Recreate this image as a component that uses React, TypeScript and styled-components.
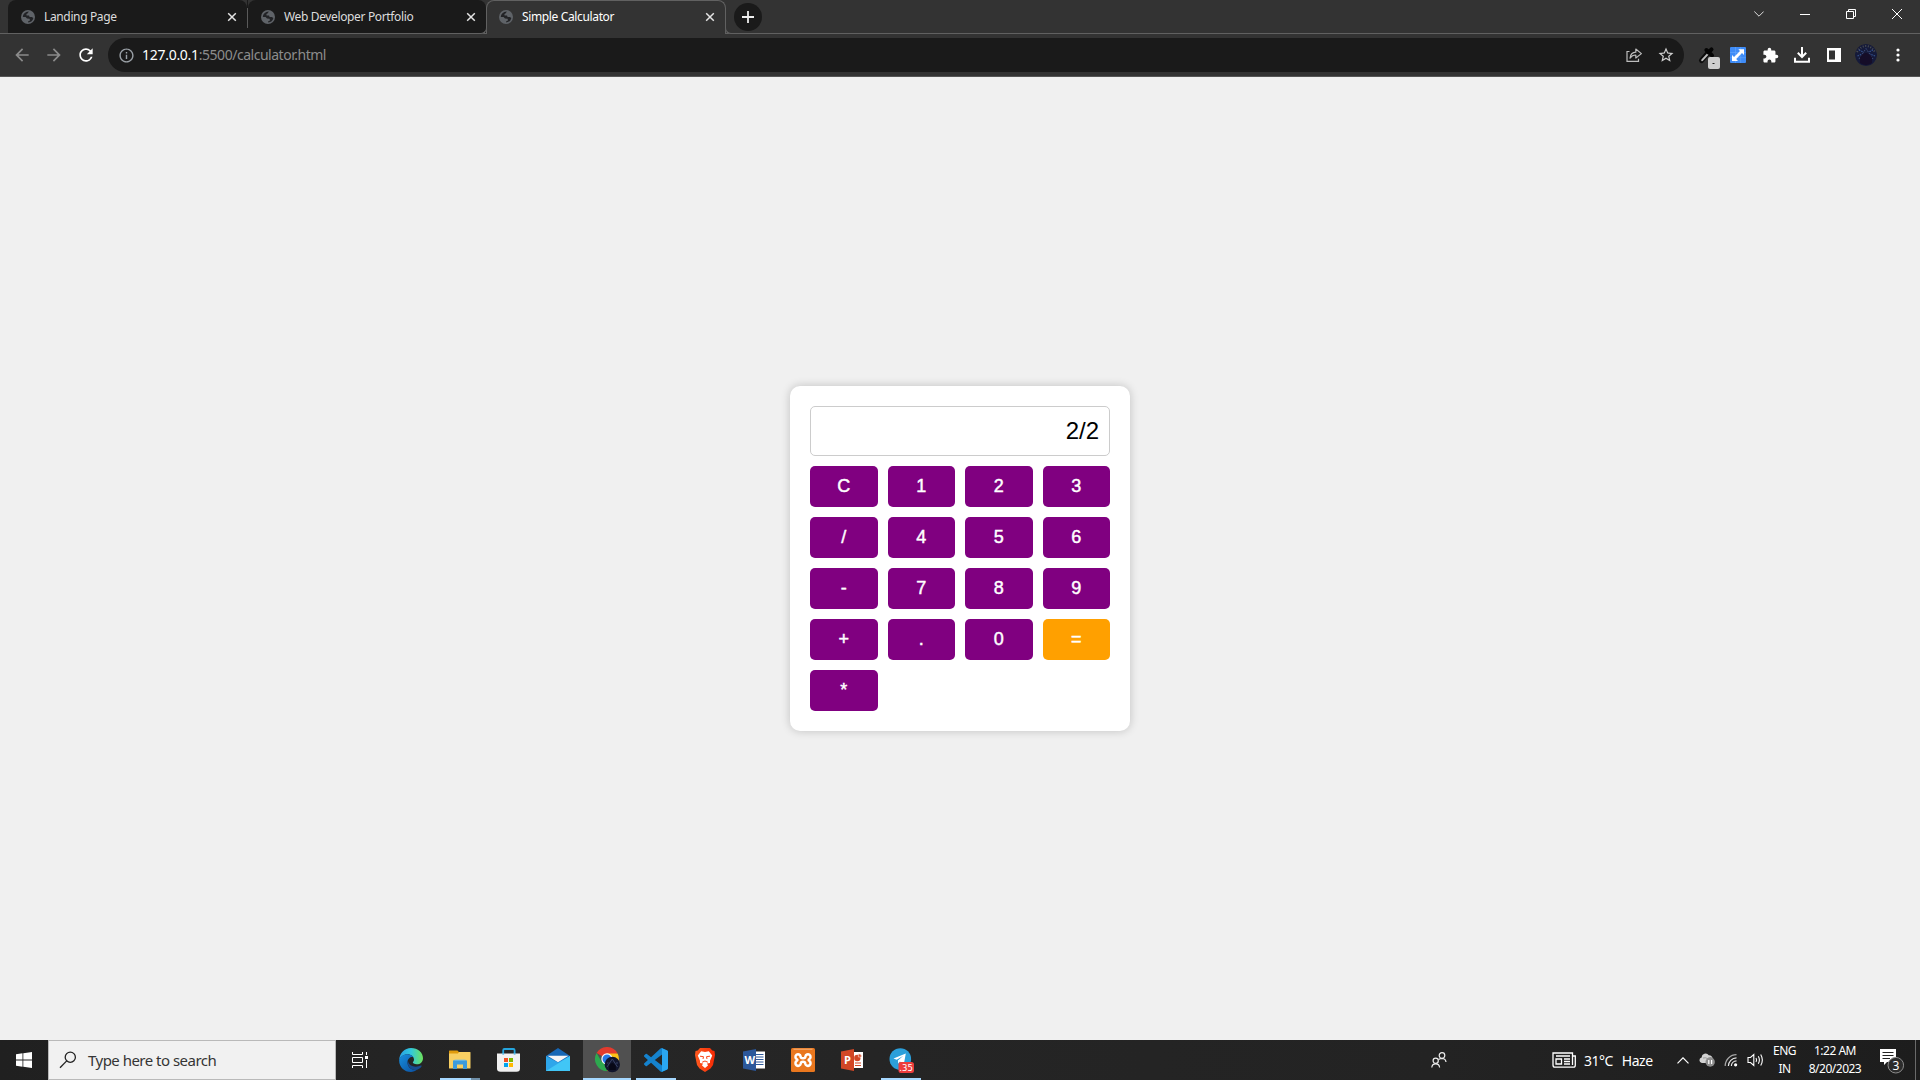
import React, { useState } from 'react';
import styled, { createGlobalStyle } from 'styled-components';
import { MdArrowBack, MdArrowForward, MdExtension, MdInfoOutline, MdRefresh, MdStarBorder } from 'react-icons/md';

const GlobalStyle = createGlobalStyle`
  *, *::before, *::after { box-sizing: border-box; }
  body { margin: 0; font-family: 'Noto Sans', 'Open Sans', sans-serif; background: #f0f0f0; }
  svg { display: block; flex: none; }
`;

const Screen = styled.div`
  width: 1920px;
  height: 1080px;
  display: flex;
  flex-direction: column;
  overflow: hidden;
`;

/* ---------- Browser chrome ---------- */

const TabStrip = styled.header`
  height: 34px;
  display: flex;
  padding-left: 8px;
  background: #333;
  border-bottom: 1px solid #616161;
`;

const Tab = styled.div<{ $active?: boolean; $width: number }>`
  position: relative;
  flex: none;
  width: ${p => p.$width}px;
  height: ${p => (p.$active ? 34 : 33)}px;
  display: flex;
  align-items: center;
  padding: 0 10px ${p => (p.$active ? 2 : 0)}px ${p => (p.$active ? 12 : 13)}px;
  background: ${p => (p.$active ? '#333' : '#1a1a1a')};
  color: ${p => (p.$active ? '#fff' : '#dcdcdc')};
  border: ${p => (p.$active ? '1px solid #616161' : '0')};
  border-bottom: 0;
  border-radius: 8px 8px 0 0;
  &::before, &::after {
    content: '';
    display: ${p => (p.$active ? 'block' : 'none')};
    position: absolute;
    bottom: 0;
    width: 6px;
    height: 6px;
    border-bottom: 1px solid #616161;
  }
  &::before { left: -6px; background: #1a1a1a; border-right: 1px solid #616161; border-bottom-right-radius: 6px; }
  &::after { right: -6px; background: #333; border-left: 1px solid #616161; border-bottom-left-radius: 6px; }
`;

const TabDivider = styled.div`
  width: 1px;
  height: 33px;
  padding: 8px 0 5px;
  background: #5a5a5a content-box, #1a1a1a;
  background: linear-gradient(#5a5a5a, #5a5a5a) content-box, #1a1a1a;
`;

const TabTitle = styled.span`
  flex: 1;
  padding-left: 9px;
  font-size: 12px;
  line-height: 16px;
  white-space: nowrap;
  letter-spacing: -0.36px;
`;

const NewTab = styled.div`
  width: 28px;
  height: 28px;
  margin: 3px 0 0 8px;
  border-radius: 50%;
  background: #1a1a1a;
  display: grid;
  place-items: center;
`;

const WindowControls = styled.div`
  display: flex;
  margin-left: auto;
`;

const WindowButton = styled.div`
  width: 46px;
  height: 28px;
  display: grid;
  place-items: center;
`;

const Toolbar = styled.div`
  height: 43px;
  display: flex;
  align-items: center;
  padding: 0 6px;
  background: #333;
  border-bottom: 1px solid #555;
`;

const ToolButton = styled.div<{ $color?: string }>`
  width: 32px;
  height: 32px;
  display: grid;
  place-items: center;
  color: ${p => p.$color ?? '#fff'};
`;

const Omnibox = styled.div`
  width: 1576px;
  height: 34px;
  margin: 0 6px;
  padding: 0 2px;
  display: flex;
  align-items: center;
  border-radius: 17px;
  background: #1a1a1a;
`;

const Url = styled.div`
  flex: 1;
  font-size: 14px;
  line-height: 20px;
  letter-spacing: -0.48px;
  color: #8c8c8c;
`;

const Host = styled.span`
  color: #fff;
  letter-spacing: -0.28px;
`;

const Avatar = styled.div`
  width: 22px;
  height: 22px;
  border-radius: 50%;
  overflow: hidden;
`;

/* ---------- Calculator ---------- */

const Page = styled.main`
  flex: 1;
  display: flex;
  justify-content: center;
  align-items: center;
  background: #f0f0f0;
`;

const Card = styled.div`
  width: 340px;
  padding: 20px;
  border-radius: 10px;
  background: #fff;
  box-shadow: 0 0 10px rgba(0, 0, 0, 0.2);
`;

const Display = styled.input`
  display: block;
  width: 100%;
  height: 50px;
  margin: 0 0 10px;
  padding: 10px;
  border: 1px solid #ccc;
  border-radius: 5px;
  outline: 0;
  background: #fff;
  color: #000;
  font: 24px 'Liberation Sans', Arial, sans-serif;
  text-align: right;
`;

const Keys = styled.div`
  display: grid;
  grid-template-columns: repeat(4, 1fr);
  gap: 10px;
`;

const Key = styled.button<{ $accent?: boolean }>`
  height: 41px;
  padding: 9px 10px 11px;
  border: 0;
  border-radius: 5px;
  background: ${p => (p.$accent ? '#ffa000' : '#800080')};
  color: #fff;
  font: 18px/20px 'Liberation Sans', Arial, sans-serif;
  -webkit-text-stroke: 0.45px #fff;
  cursor: pointer;
`;

/* ---------- Taskbar ---------- */

const Taskbar = styled.footer`
  height: 40px;
  display: flex;
  background: linear-gradient(90deg, #202020, #262626 30%, #232323 75%, #1d1d1d);
  color: #fff;
`;

const StartButton = styled.div`
  width: 48px;
  display: grid;
  place-items: center;
`;

const SearchBox = styled.div`
  width: 288px;
  display: flex;
  align-items: center;
  padding-left: 10px;
  gap: 11px;
  border: 1px solid #b9b9b9;
  background: #f1f1f1;
  color: #353535;
  font-size: 15px;
  letter-spacing: -0.52px;
`;

const Apps = styled.div`
  display: flex;
  gap: 1px;
  margin-left: 3px;
`;

const TaskbarApp = styled.div<{ $state?: 'open' | 'stacked' | 'active' }>`
  width: 48px;
  height: 40px;
  display: grid;
  grid-template-rows: 38px 2px;
  place-items: center;
  background: ${p => (p.$state === 'active' ? '#505050' : 'transparent')};
  svg { margin-top: 1px; }
  &::after {
    content: '';
    width: ${p => (p.$state === 'active' ? 48 : 40)}px;
    height: 2px;
    background: ${p =>
      !p.$state ? 'transparent' : p.$state === 'stacked' ? 'linear-gradient(90deg, #a6d8ff 31px, #6f8fa8 31px)' : '#a6d8ff'};
  }
`;

const Tray = styled.div`
  display: flex;
  margin-left: auto;
`;

const TrayCell = styled.div<{ $width: number }>`
  width: ${p => p.$width}px;
  display: grid;
  place-items: center;
`;

const Weather = styled.div`
  width: 128px;
  margin-left: 80px;
  padding-left: 9px;
  display: flex;
  align-items: center;
  font-size: 14px;
  letter-spacing: -0.5px;
`;

const Temperature = styled.span`
  margin: 0 9px 0 8px;
`;

const TrayText = styled.div<{ $width: number }>`
  width: ${p => p.$width}px;
  padding-top: 2px;
  text-align: center;
  font-size: 12px;
  line-height: 17.5px;
  letter-spacing: -0.5px;
`;

const ShowDesktop = styled.div`
  width: 5px;
  border-left: 1px solid #6a6a6a;
`;

/* ---------- Icons ---------- */

const Globe = () => (
  <svg width="14" height="14" viewBox="0 0 14 14">
    <circle cx="7" cy="7" r="7" fill="#5f6368" />
    <path d="M7.8 1.6 6.8 3.2 5.4 4 5.6 5.4 8 5.6 8.6 7H10.8L12.4 8A5.6 5.6 0 0 1 7.2 12.4V11.2L9 10.4 8.6 8.8 6 8.4 4.6 7H1.8A5.5 5.5 0 0 1 3.2 3.6 6 6 0 0 1 7.8 1.6Z" fill="#222326" />
  </svg>
);

const CloseX = () => (
  <svg width="10" height="10" viewBox="0 0 10 10">
    <path d="M1.2 1.2 8.8 8.8M8.8 1.2 1.2 8.8" stroke="#e4e4e4" strokeWidth="1.5" />
  </svg>
);

const Share = () => (
  <svg width="16" height="16" viewBox="0 0 16 16" fill="none" stroke="#bdbdbd" strokeWidth="1.2">
    <path d="M3.5 4.5H1V14.4H12.5V11.8" />
    <path d="M4 11.2C4.4 7.5 6.6 5.3 9.8 5.2V2L15.4 6.6 9.8 11V8C7.2 8 5.4 9 4 11.2Z" strokeLinejoin="round" />
  </svg>
);

const Dropper = () => (
  <svg width="32" height="32" viewBox="0 0 32 32">
    <path d="M11.5 21.5 18 14" stroke="#0c0c0c" strokeWidth="5" strokeLinecap="round" />
    <path d="M12.2 21.2 18.2 14.6" stroke="#bdbdbd" strokeWidth="2" strokeLinecap="round" />
    <path d="M16.4 11 22 16.4M18.5 13.5 21.5 10.4" stroke="#050505" strokeWidth="4" strokeLinecap="round" />
    <rect x="18" y="18" width="12" height="12" rx="2" fill="#cfcfcf" />
    <path d="M22.5 24.5H24.5" stroke="#222" />
  </svg>
);

const Expand = () => (
  <svg width="16" height="16" viewBox="0 0 16 16">
    <rect width="16" height="16" rx="1" fill="#3f8cf7" />
    <path d="M5.5 0V16M10.7 0V16M0 5.5H16M0 10.7H16" stroke="#67a7fb" strokeWidth=".6" />
    <path d="M8.3 2.2H14V8L12 6.1 6.2 12 8 14H2V8L4 10 10 4.1Z" fill="#fff" />
  </svg>
);

const Download = () => (
  <svg width="16" height="16" viewBox="0 0 16 16" fill="none" stroke="#fff" strokeWidth="2">
    <path d="M8 0V9.5M3.8 5.8 8 10 12.2 5.8M1 10.7V14.8H15V10.7" />
  </svg>
);

const SidePanel = () => (
  <svg width="14" height="14" viewBox="0 0 14 14">
    <path fillRule="evenodd" d="M0 0H14V14H0ZM2 2.5V11.5H8V2.5Z" fill="#fff" />
  </svg>
);

const Portrait = ({ size }: { size: number }) => (
  <svg width={size} height={size} viewBox="0 0 22 22">
    <circle cx="11" cy="11" r="11" fill="#151a3a" />
    <path d="M2 8 Q6 2 11 2 T20 8" stroke="#4d5052" strokeWidth="2" strokeDasharray="1 1.6" fill="none" />
    <path d="M2.5 12 7 10M20 12 15 10M4 6 8 8M18 6 14 8" stroke="#34508a" strokeWidth="1.3" strokeDasharray="1.5 1" />
    <path d="M4 15 11 4.5 18 15" stroke="#3f4d78" strokeWidth="1" strokeDasharray="2 1" fill="none" />
    <path d="M5 13 Q11 5 17 13V19Q11 23 5 19Z" fill="#150d28" />
  </svg>
);

const Windows = () => (
  <svg width="16" height="16" viewBox="0 0 16 16" fill="#fff">
    <path d="M0 2.2 6.5 1.3V7.6H0ZM7.3 1.2 16 0V7.6H7.3ZM0 8.4H6.5V14.7L0 13.8ZM7.3 8.4H16V16L7.3 14.8Z" />
  </svg>
);

const Search = () => (
  <svg width="18" height="18" viewBox="0 0 18 18" fill="none" stroke="#222" strokeWidth="1.3">
    <circle cx="11.3" cy="6.2" r="5.1" />
    <path d="M7.7 9.9 1 16.8" />
  </svg>
);

const TaskView = () => (
  <svg width="16" height="16" viewBox="0 0 16 16" fill="none" stroke="#fff" strokeWidth="1">
    <path d="M.5 0V2.5H10.5V0M.5 16V13.5H10.5V16M.5 5.5H10.5V10.5H.5ZM14.5 0V3M14.5 8V16" />
    <rect x="13" y="4" width="3" height="3" fill="#fff" stroke="none" />
  </svg>
);

const Edge = () => (
  <svg width="24" height="24" viewBox="0 0 24 24">
    <defs>
      <linearGradient id="edgeTop" x1="0" x2="1">
        <stop offset="0" stopColor="#279fe4" /><stop offset=".5" stopColor="#32c8dc" /><stop offset="1" stopColor="#6ee35b" />
      </linearGradient>
      <linearGradient id="edgeBase" x1="0" y1="0" x2="1" y2="1">
        <stop offset="0" stopColor="#178ede" /><stop offset="1" stopColor="#0b4f9f" />
      </linearGradient>
    </defs>
    <path d="M.2 12C.5 5.4 5.5.1 12 .1 19 .1 24 5 24 10.2 24 14 21.2 16.3 17.8 16.3 15.2 16.3 13.8 15.3 13.8 14.6 13.8 14 15 13.4 15 11.5 15 8.5 12 6.2 8.6 6.2 4.5 6.2 1.4 8.8.2 12Z" fill="url(#edgeTop)" />
    <path d="M.2 12C1 8.6 4.3 6.2 8.6 6.2 11.4 6.2 13.7 7.6 14.6 9.4 12 8.3 8.5 10.5 8.5 14.4 8.5 19 13 23 18.2 21.5 16.5 23 14.2 24 12 24 5 24-.2 18.4.2 12Z" fill="url(#edgeBase)" />
    <path d="M8.9 12.3C7.5 17 11 22.4 17 22 19.7 21.6 21.8 19.6 22.6 18.2 22.9 17.5 22.4 17.2 21.8 17.6 17 20 9.5 18.8 8.9 12.3Z" fill="#174c8f" />
  </svg>
);

const Explorer = () => (
  <svg width="22" height="20" viewBox="0 0 22 20">
    <rect x="0" y="2" width="21.5" height="16.5" rx=".6" fill="#f8cf62" />
    <path d="M0 1Q0 .5 .6 .5H8.5L10 2.2 8.8 3.6H0Z" fill="#e09b0c" />
    <path d="M4 11Q4 10.2 5 10.2H17Q18 10.2 18 11V19H14V14.5H8V19H4Z" fill="#3d9bdb" />
    <path d="M5.5 10.2H16.5" stroke="#65baf0" />
  </svg>
);

const Store = () => (
  <svg width="24" height="24" viewBox="0 0 24 24">
    <path d="M6.2 6V2.2Q6.2 1 7.4 1H16.4Q17.6 1 17.6 2.2V6" stroke="#25a5dd" strokeWidth="1.8" fill="none" />
    <path d="M0 5.5H23V20.5Q23 23.8 19.5 23.8H3.5Q0 23.8 0 20.5Z" fill="#f1f1f1" />
    <path d="M6.2 5.5V6.5M17.6 5.5V6.5" stroke="#25a5dd" strokeWidth="1.8" />
    <path d="M7 10H11V14H7Z" fill="#f25022" /><path d="M12 10H16V14H12Z" fill="#7fba00" />
    <path d="M7 15H11V19H7Z" fill="#00a4ef" /><path d="M12 15H16V19H12Z" fill="#ffb900" />
  </svg>
);

const Mail = () => (
  <svg width="24" height="23" viewBox="0 0 24 23">
    <path d="M0 8 12 0 24 8V16H0Z" fill="#1767b5" />
    <path d="M0 8 12 14.5 24 8V23H0Z" fill="#2ea6ea" />
    <path d="M24 8 0 23H24Z" fill="#41c6f6" />
    <path d="M1.5 7.8H22.5L12 14.2Z" fill="#f5f5f5" />
  </svg>
);

const Chrome = () => (
  <svg width="26" height="26" viewBox="-1 0 26 26">
    <path d="M12 12 1.6 6A12 12 0 0 1 22.4 6Z" fill="#e33b2e" />
    <path d="M12 12V24A12 12 0 0 1 1.6 6L6.8 15Z" fill="#2da94f" />
    <path d="M12 6.5H22.6A12 12 0 0 1 12 24L17 14.5Z" fill="#fbc116" />
    <circle cx="12" cy="12" r="5.7" fill="#fff" /><circle cx="12" cy="12" r="4.5" fill="#2878e8" />
    <circle cx="17.3" cy="17.5" r="7.7" fill="#11152c" />
    <path d="M12 20 17.3 12 22.5 20M12 16H13.5M21 16H23" stroke="#394266" strokeWidth="1" fill="none" />
    <path d="M14 19Q17.3 13 20.8 19V23H14Z" fill="#080817" />
  </svg>
);

const VsCode = () => (
  <svg width="24" height="24" viewBox="0 0 24 24">
    <path d="M23.15 2.587 18.21.21a1.494 1.494 0 0 0-1.705.29l-9.46 8.63-4.12-3.128a1 1 0 0 0-1.276.057L.327 7.261A1 1 0 0 0 .326 8.74L3.899 12 .326 15.26a1 1 0 0 0 .001 1.479L1.65 17.94a1 1 0 0 0 1.276.057l4.12-3.128 9.46 8.63a1.492 1.492 0 0 0 1.704.29l4.942-2.377A1.5 1.5 0 0 0 24 20.06V3.939a1.5 1.5 0 0 0-.85-1.352zM18.004 17.448 10.826 12l7.178-5.448z" fill="#1583ce" />
    <path d="M18 .2 23.15 2.6Q24 3 24 4V20Q24 21 23.15 21.4L18 23.8Z" fill="#2aa7f2" />
  </svg>
);

const Brave = () => (
  <svg width="20" height="24" viewBox="0 0 20 24">
    <defs><linearGradient id="brave"><stop stopColor="#ff5a1f" /><stop offset="1" stopColor="#f52a05" /></linearGradient></defs>
    <path d="M5 0H15L17.3 2.5 19.5 3 20 7 18 17 15.5 20.5 10 24 4.5 20.5 2 17 0 7 .5 3 2.7 2.5Z" fill="url(#brave)" />
    <path d="M6.2 3.3 10 4 13.8 3.3 17.2 7.4 16.4 9.5 15 12.7 15 15 12 15.5 13 17.5 10 20 7 17.5 8 15.5 5 15 5 12.7 3.6 9.5 2.8 7.4Z" fill="#fff" />
    <path d="M5 8.2 8.5 8.7 8 11M15 8.2 11.5 8.7 12 11M7.2 14.2 10 13 12.8 14.2" stroke="#fa4516" strokeWidth="1" fill="none" />
  </svg>
);

const OfficeLetter = styled.text`
  font: bold 11px 'Open Sans', sans-serif;
  fill: #fff;
`;

const Word = () => (
  <svg width="22" height="22" viewBox="0 0 22 22">
    <rect x="11" y="2.5" width="11" height="17" fill="#fff" />
    <path d="M13 5.5H20.5M13 8H20.5M13 10.5H20.5M13 13H20.5M13 15.5H20.5" stroke="#2b579a" strokeWidth="1.1" />
    <path d="M0 2.5 13 0V22L0 19.5Z" fill="#2b579a" />
    <OfficeLetter x="1.4" y="15">W</OfficeLetter>
  </svg>
);

const PowerPoint = () => (
  <svg width="22" height="22" viewBox="0 0 22 22">
    <rect x="11" y="3" width="11" height="16" fill="#fff" />
    <path d="M14 14H20M14 16.5H20" stroke="#d24726" strokeWidth="1.2" />
    <circle cx="16.3" cy="9" r="3.2" fill="#d24726" /><path d="M17.4 4.8V8H20.6A3.2 3.2 0 0 0 17.4 4.8Z" fill="#d24726" stroke="#fff" strokeWidth=".5" />
    <path d="M0 2.5 13 0V22L0 19.5Z" fill="#d24726" />
    <OfficeLetter x="3" y="15">P</OfficeLetter>
  </svg>
);

const Xampp = () => (
  <svg width="24" height="24" viewBox="0 0 24 24">
    <rect width="24" height="24" rx="1.5" fill="#e9771e" /><path d="M2.5 1.2H21.5" stroke="#f6b27b" />
    <path d="M9.6 8.8V8.4A2.6 2.6 0 1 0 5.8 11.2Q7 12 5.8 12.8A2.7 2.7 0 1 0 9.8 15.6Q9.6 13.8 12 13.8T14.2 15.6A2.7 2.7 0 1 0 18.2 12.8Q17 12 18.2 11.2A2.6 2.6 0 1 0 14.4 8.4Q14.4 10.2 12 10.2T9.6 8.4" fill="none" stroke="#fff" strokeWidth="2.5" />
  </svg>
);

const BadgeText = styled.text`
  font: 8.5px 'DejaVu Sans', sans-serif;
  fill: #fff;
`;

const Telegram = () => (
  <svg width="26" height="26" viewBox="-1 0 26 26">
    <circle cx="11.3" cy="12" r="10.8" fill="#2b9fda" />
    <path d="M4.5 11.4 16.8 6.6 14.8 17.4 10.9 14.6 9.3 16.8 8.9 13.5 14.3 8.8 7.7 12.7Z" fill="#fff" />
    <rect x="9.5" y="15" width="15.5" height="11" rx="2.5" fill="#ed3d3d" />
    <BadgeText x="10.3" y="23.5" textLength="13.5">.35</BadgeText>
  </svg>
);

const People = () => (
  <svg width="16" height="16" viewBox="0 0 16 16" fill="none" stroke="#eee" strokeWidth="1.2">
    <circle cx="11" cy="3.5" r="2.8" /><circle cx="4.7" cy="8.8" r="2.6" />
    <path d="M.8 15.5Q1 11.8 4.7 11.8T8.6 15.5M7.5 7.5Q9 6.5 11 6.5 14.6 6.6 15 10" />
  </svg>
);

const News = () => (
  <svg width="24" height="16" viewBox="0 0 24 16" fill="none" stroke="#fff" strokeWidth="1.3">
    <path d="M20.5 12V1H1V13Q1 15.2 3 15.2H21.5Q23.3 15.2 23.3 13V4H20.5V13M4 4H18M12 7H18M12 9.5H18M12 12H18M4 7H9.5V12H4Z" />
  </svg>
);

const Cloud = () => (
  <svg width="16" height="14" viewBox="0 0 16 14">
    <path d="M2.8 10A2.8 2.8 0 0 1 2.6 4.5 4 4 0 0 1 9.8 2.2 3.5 3.5 0 0 1 13.5 6L9 10Z" fill="#d2d2d2" />
    <path d="M4 5Q7 4 9 6L12.5 4" stroke="#9a9a9a" fill="none" />
    <circle cx="11.2" cy="9" r="4.7" fill="#8d8d8d" /><path d="M9.8 7V11M12.6 7V11" stroke="#fff" strokeWidth="1.2" />
  </svg>
);

const Wifi = () => (
  <svg width="14" height="14" viewBox="0 0 14 14" fill="none" strokeWidth="1.2">
    <path d="M1.2 13A11.3 11.3 0 0 1 12.5 1.7" stroke="#a8a8a8" />
    <path d="M4.4 13A8.2 8.2 0 0 1 12.5 4.9M7.4 13A5.2 5.2 0 0 1 12.5 7.9" stroke="#e8e8e8" />
    <circle cx="11.6" cy="11.8" r="1.6" fill="#fff" />
  </svg>
);

const Speaker = () => (
  <svg width="18" height="14" viewBox="0 0 18 14" fill="none" stroke="#fff" strokeWidth="1.1">
    <path d="M1 4.5H3.5L6.8 1.5V12.5L3.5 9.5H1ZM9 5Q10.2 7 9 9M11.3 3.3Q13.5 7 11.3 10.7M13.7 1.5Q17 7 13.7 12.5" />
  </svg>
);

const CountText = styled.text`
  font: 12px 'Noto Sans', sans-serif;
  fill: #fff;
`;

const Notifications = () => (
  <svg width="26" height="28" viewBox="0 0 26 28">
    <path d="M1 3H17V16H8L5 19V16H1Z" fill="#fff" />
    <path d="M3.5 6.5H14.5M3.5 9.5H14.5M3.5 12.5H11" stroke="#222" />
    <circle cx="16.8" cy="19.2" r="7.8" fill="#2c2c2c" stroke="#8c8c8c" />
    <CountText x="13.5" y="23.6">3</CountText>
  </svg>
);

const tabs = [
  { title: 'Landing Page', width: 239 },
  { title: 'Web Developer Portfolio', width: 238 },
  { title: 'Simple Calculator', width: 240, active: true },
];

const keys = ['C', '1', '2', '3', '/', '4', '5', '6', '-', '7', '8', '9', '+', '.', '0', '=', '*'];

export default function App() {
  const [expression, setExpression] = useState('2/2');

  const evaluate = () => {
    const match = expression.match(/^(-?[\d.]+)([-+*/])(-?[\d.]+)$/);
    if (!match) return;
    const a = Number(match[1]);
    const b = Number(match[3]);
    const result = match[2] === '+' ? a + b : match[2] === '-' ? a - b : match[2] === '*' ? a * b : a / b;
    setExpression(String(result));
  };

  const press = (key: string) => {
    if (key === 'C') setExpression('');
    else if (key === '=') evaluate();
    else setExpression(expression + key);
  };

  return (
    <Screen>
      <GlobalStyle />
      <TabStrip>
        {tabs.map((tab, i) => (
          <React.Fragment key={tab.title}>
            {i === 1 && <TabDivider />}
            <Tab $active={tab.active} $width={tab.width}>
              <Globe />
              <TabTitle>{tab.title}</TabTitle>
              <CloseX />
            </Tab>
          </React.Fragment>
        ))}
        <NewTab>
          <svg width="12" height="12" viewBox="0 0 12 12"><path d="M6 0V12M0 6H12" stroke="#eee" strokeWidth="1.8" /></svg>
        </NewTab>
        <WindowControls>
          <WindowButton><svg width="10" height="6" viewBox="0 0 10 6"><path d="M.3.5 5 5.2 9.7.5" fill="none" stroke="#ddd" /></svg></WindowButton>
          <WindowButton><svg width="10" height="2" viewBox="0 0 10 2"><path d="M0 1.5H10" stroke="#fff" /></svg></WindowButton>
          <WindowButton><svg width="10" height="10" viewBox="0 0 10 10"><path d="M.5 2.5H7.5V9.5H.5ZM2.5 2.5V.5H9.5V7.5H7.5" fill="none" stroke="#fff" /></svg></WindowButton>
          <WindowButton><svg width="10" height="10" viewBox="0 0 10 10"><path d="M0 0 10 10M10 0 0 10" stroke="#fff" /></svg></WindowButton>
        </WindowControls>
      </TabStrip>

      <Toolbar>
        <ToolButton $color="#8b8b8b"><MdArrowBack size={20} /></ToolButton>
        <ToolButton $color="#8b8b8b"><MdArrowForward size={20} /></ToolButton>
        <ToolButton><MdRefresh size={20} /></ToolButton>
        <Omnibox>
          <ToolButton $color="#9aa0a6"><MdInfoOutline size={17} /></ToolButton>
          <Url><Host>127.0.0.1</Host>:5500/calculator.html</Url>
          <ToolButton><Share /></ToolButton>
          <ToolButton $color="#cfcfcf"><MdStarBorder size={18} /></ToolButton>
        </Omnibox>
        <ToolButton><Dropper /></ToolButton>
        <ToolButton><Expand /></ToolButton>
        <ToolButton><MdExtension size={17} /></ToolButton>
        <ToolButton><Download /></ToolButton>
        <ToolButton><SidePanel /></ToolButton>
        <ToolButton><Avatar><Portrait size={22} /></Avatar></ToolButton>
        <ToolButton>
          <svg width="4" height="14" viewBox="0 0 4 14" fill="#fff"><circle cx="2" cy="2" r="1.6" /><circle cx="2" cy="7" r="1.6" /><circle cx="2" cy="12" r="1.6" /></svg>
        </ToolButton>
      </Toolbar>

      <Page>
        <Card>
          <Display readOnly value={expression} />
          <Keys>
            {keys.map(key => (
              <Key key={key} $accent={key === '='} onClick={() => press(key)}>{key}</Key>
            ))}
          </Keys>
        </Card>
      </Page>

      <Taskbar>
        <StartButton><Windows /></StartButton>
        <SearchBox><Search />Type here to search</SearchBox>
        <StartButton><TaskView /></StartButton>
        <Apps>
          <TaskbarApp><Edge /></TaskbarApp>
          <TaskbarApp $state="stacked"><Explorer /></TaskbarApp>
          <TaskbarApp><Store /></TaskbarApp>
          <TaskbarApp><Mail /></TaskbarApp>
          <TaskbarApp $state="active"><Chrome /></TaskbarApp>
          <TaskbarApp $state="open"><VsCode /></TaskbarApp>
          <TaskbarApp><Brave /></TaskbarApp>
          <TaskbarApp><Word /></TaskbarApp>
          <TaskbarApp><Xampp /></TaskbarApp>
          <TaskbarApp><PowerPoint /></TaskbarApp>
          <TaskbarApp $state="open"><Telegram /></TaskbarApp>
        </Apps>
        <Tray>
          <TrayCell $width={48}><People /></TrayCell>
          <Weather><News /><Temperature>31°C</Temperature>Haze</Weather>
          <TrayCell $width={24}><svg width="12" height="7" viewBox="0 0 12 7"><path d="M.5 6.3 6 .8 11.5 6.3" fill="none" stroke="#fff" strokeWidth="1.2" /></svg></TrayCell>
          <TrayCell $width={24}><Cloud /></TrayCell>
          <TrayCell $width={24}><Wifi /></TrayCell>
          <TrayCell $width={25}><Speaker /></TrayCell>
          <TrayText $width={33}>ENG<br />IN</TrayText>
          <TrayText $width={68}>1:22 AM<br />8/20/2023</TrayText>
          <TrayCell $width={46}><Notifications /></TrayCell>
          <ShowDesktop />
        </Tray>
      </Taskbar>
    </Screen>
  );
}
